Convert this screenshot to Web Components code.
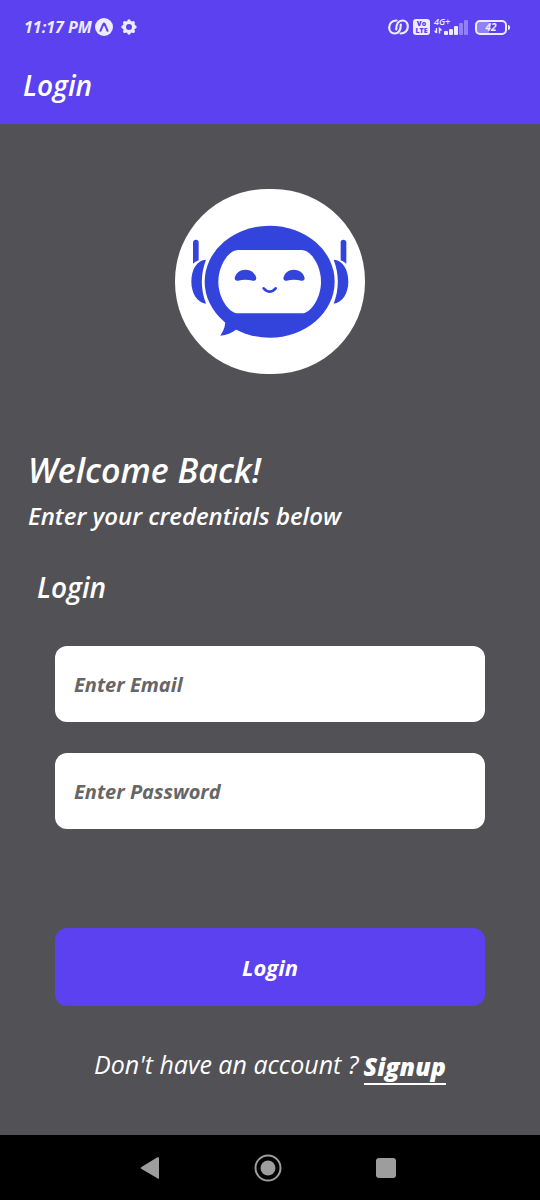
<!DOCTYPE html>
<html lang="en">
<head>
<meta charset="utf-8">
<meta name="viewport" content="width=device-width, initial-scale=1">
<title>Login</title>
<style>
  html { --brand: #5b41f0; --surface: #525156; }
  body { margin: 0; font-family: "Open Sans", "Noto Sans", sans-serif; font-style: italic; color: #fff; background: var(--surface); }
</style>
</head>
<body>
<login-screen></login-screen>
<script>
function define(name, html, setup) {
  const template = document.createElement('template');
  template.innerHTML = html;
  customElements.define(name, class extends HTMLElement {
    constructor() {
      super();
      this.attachShadow({ mode: 'open' }).append(template.content.cloneNode(true));
    }
    connectedCallback() { if (setup) setup(this, this.shadowRoot); }
  });
}

define('status-bar', `
  <style>
    :host { display: flex; align-items: center; height: 54px; padding: 0 30px 0 24px; color: #eeebff; }
    .time { font-size: 16px; line-height: 20px; font-weight: 700; }
    .left, .right { display: flex; align-items: center; }
    .left { gap: 3px; }
    .right { gap: 4px; margin-left: auto; }
    .gear { margin-left: 5px; }
    .volte { display: flex; flex-direction: column; width: 17px; height: 16px; box-sizing: border-box; padding-top: 1px; border-radius: 3px; background: #eeebff; color: var(--brand); font-size: 7px; line-height: 7px; font-weight: 800; font-style: normal; text-align: center; }
    .signal { display: grid; }
    .signal > * { grid-area: 1 / 1; }
    .signal span { font-size: 9px; line-height: 6px; font-weight: 600; }
    .battery { display: flex; align-items: center; margin-left: 3px; }
    .cell { box-sizing: border-box; width: 32px; height: 15px; border: 2px solid #eeebff; border-radius: 5px; background: linear-gradient(90deg, #9181f6 42%, transparent 42%); font-size: 10px; line-height: 11px; font-weight: 700; text-align: center; }
    .tip { width: 2px; height: 5px; margin-left: 1px; border-radius: 0 2px 2px 0; background: #eeebff; }
    svg { display: block; }
  </style>
  <div class="left">
    <span class="time">11:17 PM</span>
    <svg width="18" height="18" viewBox="0 0 18 18"><circle cx="9" cy="9" r="9" fill="#eeebff"/><path d="M5.4 12.8 8.3 6.2Q9 5 9.7 6.2L12.6 12.8" fill="none" stroke="#5b41f0" stroke-width="2" stroke-linecap="round"/></svg>
    <svg class="gear" width="16" height="16" viewBox="0 0 16 16"><circle cx="8" cy="8" r="4.6" fill="none" stroke="#eeebff" stroke-width="3.2"/><g stroke="#eeebff" stroke-width="3.4" stroke-linecap="round"><path d="M8 2v.2M8 13.8v.2M2 8h.2M13.8 8h.2M3.7 3.7l.1.1M12.2 12.2l.1.1M12.2 3.7l-.1.1M3.7 12.3l.1-.1"/></g></svg>
  </div>
  <div class="right">
    <svg width="21" height="16" viewBox="0 0 21 16" fill="none" stroke="#eeebff" stroke-width="2.2" stroke-linecap="round"><path d="M8.500 1.500C4 1.500 1.200 4.700 1.200 8.600C1.200 12 3.400 14.500 6.500 14.500C10.500 14.500 12.800 11 12.800 5.500"/><path d="M12.500 14.500C17 14.500 19.800 11.300 19.800 7.400C19.800 4 17.600 1.500 14.500 1.500C10.500 1.500 8.200 5 8.200 10.500"/></svg>
    <span class="volte"><span>Vo</span><span>LTE</span></span>
    <div class="signal"><span>4G+</span>
      <svg width="34" height="16" viewBox="0 0 34 16"><path d="M2.500 9v5M.7 11.800l1.800 2.200M5.500 14.500V9.500l2 2" fill="none" stroke="#eeebff" stroke-width="1.400"/><g fill="#eeebff"><rect x="10" y="12" width="4" height="4" rx="1"/><rect x="15" y="10" width="4" height="6" rx="1"/><rect x="20" y="7" width="4" height="9" rx="1"/></g><g fill="#9181f6"><rect x="25" y="4" width="4" height="12" rx="1"/><rect x="30" y="1" width="4" height="15" rx="1"/></g></svg>
    </div>
    <div class="battery"><span class="cell">42</span><span class="tip"></span></div>
  </div>
`);

define('app-bar', `
  <style>
    :host { display: block; background: var(--brand); }
    h1 { margin: 0; padding: 13px 23px 21px; font-size: 28px; line-height: 36px; font-weight: 600; }
  </style>
  <status-bar></status-bar>
  <h1><slot></slot></h1>
`);

define('bot-logo', `
  <style>
    :host { display: block; width: 190px; height: 185px; border-radius: 92px; overflow: hidden; background: #fff; }
    svg { display: block; width: 100%; height: 100%; }
  </style>
  <svg viewBox="31 28 570 555" role="img" aria-label="Chat bot">
    <g fill="#3344dc">
      <ellipse cx="315" cy="306" rx="195" ry="168"/>
      <path d="M181 416Q185 443 167 468Q194 466 217 448Z"/>
      <path d="M85 252V188Q86 180 94 180Q102 180 102 188V242Q92 246 85 252Z"/>
      <path d="M545 252V188Q544 180 536 180Q528 180 528 188V242Q538 246 545 252Z"/>
      <path d="M124 240C96 241 80 270 80 306C80 342 99 369 124 372Q99 306 124 240Z"/>
      <path d="M507 240C535 241 551 270 551 306C551 342 532 369 507 372Q532 306 507 240Z"/>
    </g>
    <path fill="#fff" d="M220 211H411C439 211 469 258 469 306C469 354 439 401 411 401H220C192 401 161 354 161 306C161 258 192 211 220 211Z"/>
    <g fill="#3344dc">
      <path d="M210 296C213 280 226 270 243 270C260 270 273 282 275 296Q275 304 265 303Q242 297 220 303Q210 305 210 296Z"/>
      <path d="M356 296C359 280 372 270 388 270C405 270 418 282 420 296Q420 304 410 303Q388 297 366 303Q356 305 356 296Z"/>
    </g>
    <path d="M297 326Q315 346 333 326" fill="none" stroke="#3344dc" stroke-width="8" stroke-linecap="round"/>
  </svg>
`);

define('text-field', `
  <style>
    :host { display: block; }
    input { display: block; box-sizing: border-box; width: 100%; height: 76px; padding: 0 19px; border: 0; border-radius: 12px; background: #fff; color: #333; font: inherit; font-size: 20px; font-weight: 700; outline-offset: 2px; }
    input::placeholder { color: #666; opacity: 1; }
  </style>
  <input>
`, (host, root) => {
  const input = root.querySelector('input');
  input.type = host.getAttribute('type');
  input.placeholder = host.getAttribute('label');
  input.setAttribute('aria-label', host.getAttribute('label'));
});

define('primary-button', `
  <style>
    :host { display: block; }
    button { display: block; width: 100%; height: 78px; padding: 0; border: 0; border-radius: 12px; background: var(--brand); color: #fff; font: inherit; font-size: 22px; font-weight: 700; }
  </style>
  <button type="button"><slot></slot></button>
`);

define('nav-bar', `
  <style>
    :host { display: flex; height: 65px; padding: 0 95px 0 91px; background: #000; }
    button { flex: 1; display: grid; place-items: center; padding: 0; border: 0; background: none; }
    svg { display: block; }
  </style>
  <button type="button" aria-label="Back"><svg width="20" height="24" viewBox="0 0 20 24"><path d="M19 1.500V22.500Q18 23 17 22L1.500 13Q0 12 1.500 11L17 1.500Q18 1 19 1.500Z" fill="#9d9d9d"/></svg></button>
  <button type="button" aria-label="Home"><svg width="28" height="28" viewBox="0 0 28 28"><circle cx="14" cy="14" r="12.500" fill="none" stroke="#9d9d9d" stroke-width="2"/><circle cx="14" cy="14" r="7.500" fill="#9d9d9d"/></svg></button>
  <button type="button" aria-label="Recent apps"><svg width="20" height="20" viewBox="0 0 20 20"><rect width="20" height="20" rx="3" fill="#9d9d9d"/></svg></button>
`);

define('login-screen', `
  <style>
    :host { display: flex; flex-direction: column; min-height: 100vh; background: var(--surface); }
    main { flex: 1; display: flex; flex-direction: column; }
    bot-logo { margin: 65px auto 74px; }
    h2, h3, p { margin: 0; }
    h2 { padding: 0 28px; font-size: 34px; line-height: 44px; font-weight: 600; }
    .sub { padding: 8px 28px 0; font-size: 24px; line-height: 32px; font-weight: 600; }
    h3 { padding: 37px 37px 0; font-size: 28px; line-height: 36px; font-weight: 600; }
    form { display: flex; flex-direction: column; gap: 31px; padding: 41px 55px 0; }
    primary-button { margin-top: 68px; }
    .signup { display: flex; justify-content: center; align-items: flex-start; gap: 5px; padding: 42px 0 48px; font-size: 25px; line-height: 32px; }
    a { padding: 2px 0 1px; color: #fff; font-weight: 800; text-decoration: none; border-bottom: 2px solid #fff; }
  </style>
  <app-bar>Login</app-bar>
  <main>
    <bot-logo></bot-logo>
    <h2>Welcome Back!</h2>
    <p class="sub">Enter your credentials below</p>
    <h3>Login</h3>
    <form>
      <text-field type="email" label="Enter Email"></text-field>
      <text-field type="password" label="Enter Password"></text-field>
      <primary-button>Login</primary-button>
    </form>
    <p class="signup"><span>Don't have an account ?</span><a href="#signup">Signup</a></p>
  </main>
  <nav-bar></nav-bar>
`);
</script>
</body>
</html>
